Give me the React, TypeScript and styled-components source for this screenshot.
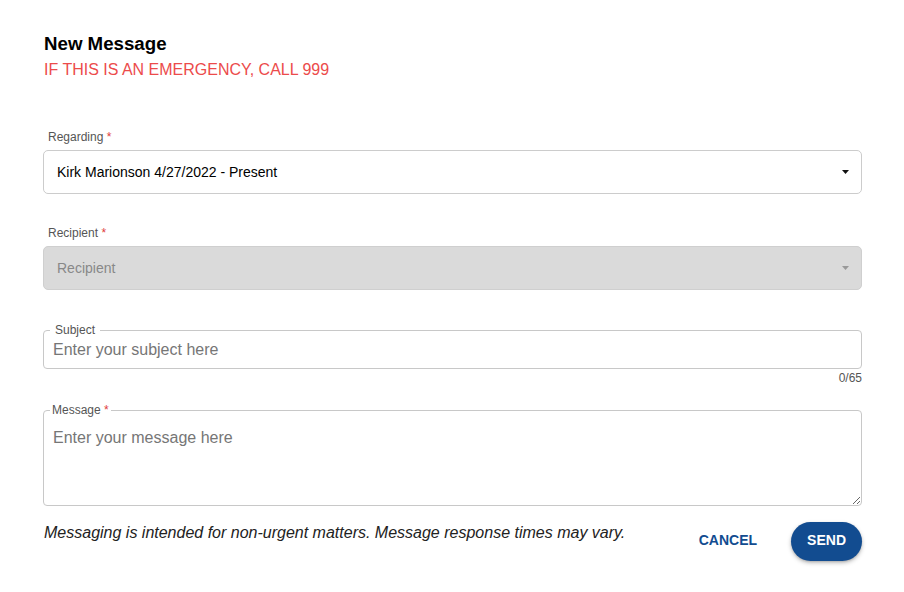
import React from "react";
import styled, { createGlobalStyle } from "styled-components";

const Global = createGlobalStyle`
  html, body { margin: 0; padding: 0; background: #fff; }
  body { font-family: "Liberation Sans", Arial, sans-serif; color: #000; }
  * { box-sizing: border-box; }
`;

const Page = styled.div`
  width: 904px;
  padding: 33px 42px 30px 43px;
  display: flex;
  flex-direction: column;
`;

const Title = styled.h1`
  margin: 0 0 0 1px;
  font-size: 18.7px;
  line-height: 22px;
  font-weight: 700;
  color: #000;
`;

const Warning = styled.div`
  margin: 5px 0 0 1px;
  font-size: 16px;
  line-height: 19px;
  color: #ec4b4b;
`;

const Field = styled.div<{ $top: number }>`
  margin-top: ${(p) => p.$top}px;
  display: flex;
  flex-direction: column;
`;

const Label = styled.label`
  margin-left: 5px;
  font-size: 12px;
  line-height: 14px;
  color: #555;
  margin-bottom: 6px;
`;

const Star = styled.span`
  color: #e03c3c;
`;

const SelectBox = styled.div<{ $disabled?: boolean }>`
  height: 44px;
  border: 1px solid ${(p) => (p.$disabled ? "#cfcfcf" : "#cccccc")};
  border-radius: 5px;
  background: ${(p) => (p.$disabled ? "#dadada" : "#fff")};
  display: flex;
  align-items: center;
  justify-content: space-between;
  padding: 0 12px 0 13px;
  font-size: 14px;
  color: ${(p) => (p.$disabled ? "#888" : "#000")};
`;

const Caret = styled.svg`
  display: block;
  width: 7px;
  height: 4px;
`;

const Outline = styled.fieldset<{ $legendPad: number }>`
  margin: 0;
  min-width: 0;
  border: 1px solid #c8c8c8;
  border-radius: 4px;
  padding: 0 0 0 6px;
  display: flex;
  flex-direction: column;

  legend {
    font-size: 12px;
    line-height: 14px;
    color: #555;
    padding: 0 ${(p) => p.$legendPad}px;
  }
`;

const TextInput = styled.input`
  height: 25px;
  margin-bottom: 6px;
  border: none;
  outline: none;
  padding: 1px 3px 0;
  font-family: "Liberation Sans", Arial, sans-serif;
  font-size: 16px;
  color: #000;
  background: transparent;
  &::placeholder { color: #767676; }
`;

const Counter = styled.div`
  align-self: flex-end;
  margin-top: 2px;
  font-size: 12px;
  line-height: 14px;
  color: #555;
`;

const TextArea = styled.textarea`
  height: 88px;
  border: none;
  outline: none;
  resize: vertical;
  padding: 12px 8px 0 3px;
  font-family: "Liberation Sans", Arial, sans-serif;
  font-size: 16px;
  line-height: 18px;
  background: transparent;
  border-radius: 0 0 4px 0;
  &::placeholder { color: #767676; }
`;

const Footer = styled.div`
  margin-top: 16px;
  display: flex;
  align-items: flex-start;
  justify-content: space-between;
`;

const Note = styled.p`
  margin: 2px 0 0 1px;
  font-size: 16px;
  line-height: 18px;
  font-style: italic;
  color: #222;
`;

const Actions = styled.div`
  display: flex;
  align-items: center;
  gap: 18px;
`;

const Button = styled.button<{ $primary?: boolean }>`
  height: 39px;
  padding: 0 16px 3px;
  border: none;
  border-radius: 20px;
  font-family: "Liberation Sans", Arial, sans-serif;
  font-size: 14px;
  font-weight: 700;
  cursor: pointer;
  color: ${(p) => (p.$primary ? "#fff" : "#124c90")};
  background: ${(p) => (p.$primary ? "#124c90" : "transparent")};
  box-shadow: ${(p) =>
    p.$primary ? "0 2px 4px rgba(0,0,0,0.25), 0 1px 2px rgba(0,0,0,0.12)" : "none"};
`;

const CaretIcon = ({ color }: { color: string }) => (
  <Caret viewBox="0 0 7 4">
    <path d="M0 0 H7 L3.5 4 Z" fill={color} />
  </Caret>
);

export default function App() {
  return (
    <>
      <Global />
      <Page>
        <Title>New Message</Title>
        <Warning>IF THIS IS AN EMERGENCY, CALL 999</Warning>

        <Field $top={51}>
          <Label>
            Regarding <Star>*</Star>
          </Label>
          <SelectBox>
            <span>Kirk Marionson 4/27/2022 - Present</span>
            <CaretIcon color="#111" />
          </SelectBox>
        </Field>

        <Field $top={32}>
          <Label>
            Recipient <Star>*</Star>
          </Label>
          <SelectBox $disabled>
            <span>Recipient</span>
            <CaretIcon color="#999" />
          </SelectBox>
        </Field>

        <Field $top={33}>
          <Outline $legendPad={5}>
            <legend>Subject</legend>
            <TextInput placeholder="Enter your subject here" />
          </Outline>
          <Counter>0/65</Counter>
        </Field>

        <Field $top={18}>
          <Outline $legendPad={2}>
            <legend>
              Message <Star>*</Star>
            </legend>
            <TextArea placeholder="Enter your message here" />
          </Outline>
        </Field>

        <Footer>
          <Note>
            Messaging is intended for non-urgent matters. Message response times may vary.
          </Note>
          <Actions>
            <Button>CANCEL</Button>
            <Button $primary>SEND</Button>
          </Actions>
        </Footer>
      </Page>
    </>
  );
}
